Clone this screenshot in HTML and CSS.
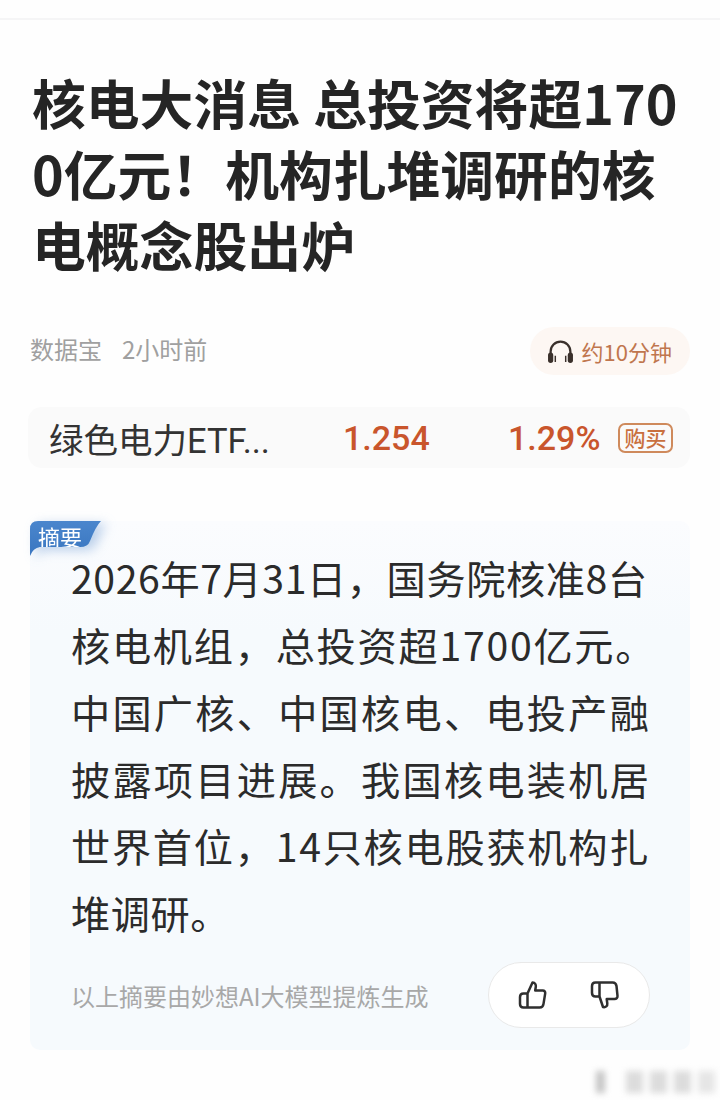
FILE: index.html
```html
<!DOCTYPE html>
<html lang="zh">
<head>
<meta charset="utf-8">
<title>核电大消息</title>
<link rel="stylesheet" href="styles.css">
</head>
<body>
<div class="page">
  <div class="topline"></div>
  <h1 class="title">核电大消息 总投资将超1700亿元！机构扎堆调研的核电概念股出炉</h1>
  <div class="meta">
    <div class="source"><span>数据宝</span><span>2小时前</span></div>
    <div class="listen">
      <svg class="headset" viewBox="0 0 26 24" width="27" height="25"><path d="M3.500 17V12a9.500 9.500 0 0 1 19 0v5" fill="none" stroke="#3a302b" stroke-width="2.200"/><rect x="1" y="13" width="5" height="10" rx="2.500" fill="#3a302b"/><rect x="20" y="13" width="5" height="10" rx="2.500" fill="#3a302b"/><path d="M8 16v6M18 16v6" stroke="#3a302b" stroke-width="1.400"/></svg>
      <span>约10分钟</span>
    </div>
  </div>
  <div class="etf">
    <span class="etf-name">绿色电力ETF...</span>
    <span class="etf-price">1.254</span>
    <span class="etf-pct">1.29%</span>
    <span class="etf-buy">购买</span>
  </div>
  <section class="summary">
    <div class="tag"><div class="tag-shape">摘要</div></div>
    <p class="summary-text">
      <span class="line tight">2026年7月31日，国务院核准8台</span>
      <span class="line mid">核电机组，总投资超1700亿元。</span>
      <span class="line wide">中国广核、中国核电、电投产融</span>
      <span class="line wide">披露项目进展。我国核电装机居</span>
      <span class="line mid">世界首位，14只核电股获机构扎</span>
      <span class="line tight">堆调研。</span>
    </p>
    <div class="summary-foot">
      <span class="note">以上摘要由妙想AI大模型提炼生成</span>
      <div class="votes">
        <svg viewBox="0 0 32 32" width="32" height="32"><path d="M10.500 14.500 15.500 3.500c2.600.2 3.600 2 3.300 4.300l-.6 3.700h7.600c1.600 0 2.700 1.300 2.400 2.900l-1.700 10.500c-.3 2.200-1.700 3.600-3.800 3.600H6.500c-2 0-3.500-1.400-3.500-3.500v-7c0-2.100 1.500-3.500 3.500-3.500h4v14" fill="none" stroke="#2f2f2f" stroke-width="2.500" stroke-linejoin="round"/></svg>
        <svg viewBox="0 0 32 32" width="32" height="32"><path d="M10.500 17.500 14 28c2.800.6 4.600-1 4.300-3.500l-.6-4.500h7.800c2 0 3.200-1.300 3-3.200L27.500 7c-.4-2.200-1.700-3.500-3.800-3.500H6.500C4.400 3.500 3 5 3 7v7c0 2.100 1.400 3.500 3.500 3.500h4V3.500" fill="none" stroke="#2f2f2f" stroke-width="2.500" stroke-linejoin="round"/></svg>
      </div>
    </div>
  </section>
  <div class="watermark"><i class="w-dark"></i><i></i><i></i><i></i><i class="w-light"></i></div>
</div>
</body>
</html>
```
FILE: styles.css
```css
* { box-sizing: border-box; }
html, body { margin: 0; background: #fefefe; }
body { font-family: "Noto Sans CJK SC", "Noto Sans", sans-serif; }
.page { position: relative; width: 720px; height: 1100px; overflow: hidden; padding-top: 18px; }
.topline { height: 2px; background: #f5f5f6; }
.title { margin: 46px 30px 0 32px; font-size: 53.800px; line-height: 71px; font-weight: 700; color: #252525; word-break: break-all; }
.meta { display: flex; justify-content: space-between; align-items: center; height: 48px; margin: 48px 30px 0; }
.source { display: flex; gap: 20px; padding-bottom: 6px; font-size: 24px; color: #a0a0a0; }
.listen { display: flex; align-items: center; gap: 8px; height: 48px; padding: 0 18px 0 17px; border-radius: 24px; background: #fdf7f3; color: #c0764e; font-size: 22px; }
.etf { display: flex; align-items: center; height: 61px; margin: 32px 30px 0 28px; padding-left: 21px; border-radius: 14px; background: #fafafa; font-family: Roboto, "Noto Sans CJK SC", sans-serif; }
.etf-name { width: 294px; font-size: 34.500px; color: #333; }
.etf-price { width: 165px; font-size: 34px; font-weight: 500; color: #c9552c; }
.etf-pct { width: 110px; font-size: 34px; font-weight: 500; color: #c9552c; }
.etf-buy { width: 55px; height: 30px; border: 2px solid #cf8a5c; border-radius: 7px; color: #c9703f; font-family: "Noto Sans CJK SC", sans-serif; font-size: 21px; font-weight: 500; line-height: 25px; text-align: center; }
.summary { position: relative; margin: 53px 30px 0; padding: 23px 30px 22px 41px; height: 529px; background: linear-gradient(#fbfcfe, #f6fafd 110px); border-radius: 10px; }
.tag { position: absolute; left: 0; top: 0; filter: drop-shadow(6px 3px 6px rgba(63, 124, 198, .35)); }
.tag-shape { width: 73px; height: 35px; padding-left: 8px; background: linear-gradient(#4a86cd, #3a76c0); color: #fff; font-size: 22px; line-height: 30px; clip-path: path("M0 8 Q0 0 8 0 L71 0 Q66 5 60 20 Q58 26 50 26 L10 26 Q3 27 0 35 Z"); }
.summary-text { margin: 0; font-size: 39.200px; line-height: 67px; color: #2b2b2b; }
.line { display: block; white-space: nowrap; }
.tight { letter-spacing: .6px; }
.mid { letter-spacing: 1.750px; }
.wide { letter-spacing: 2.250px; }
.summary-foot { display: flex; justify-content: space-between; align-items: center; margin: 16px 10px 0 0; }
.note { font-size: 24px; color: #a8a8a8; }
.votes { display: flex; align-items: center; justify-content: center; gap: 40px; width: 162px; height: 66px; border: 1px solid #e9e9e9; border-radius: 33px; background: #fff; }
.watermark { position: absolute; left: 596px; top: 1071px; display: flex; gap: 7px; filter: blur(3px); }
.watermark i { display: block; width: 17px; height: 22px; background: #dcdcdc; }
.watermark .w-dark { width: 9px; margin-right: 14px; background: #c4c4c4; }
.watermark .w-light { background: #e6e6e6; }
```
